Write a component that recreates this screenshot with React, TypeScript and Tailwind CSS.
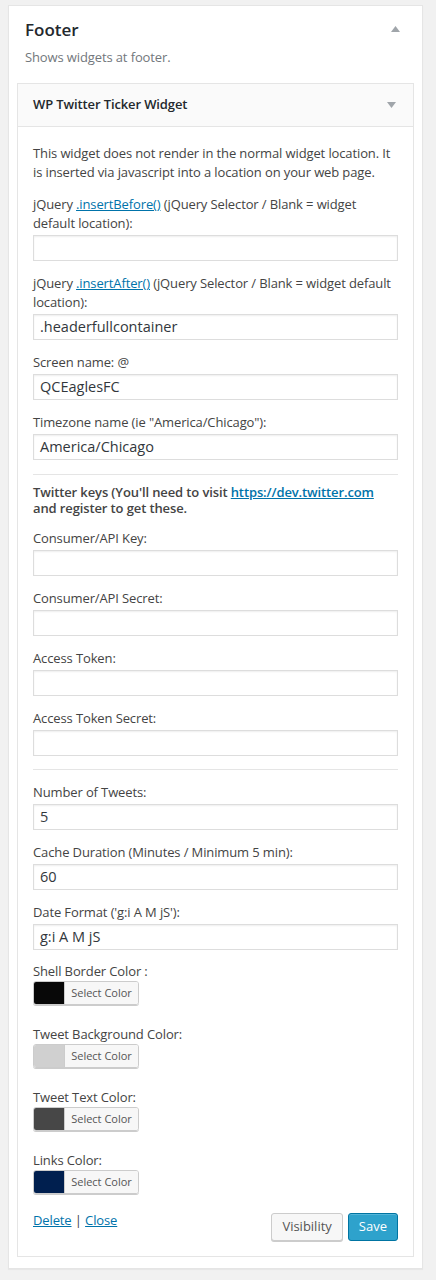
import React from "react";

const font = { fontFamily: '"Open Sans", "Noto Sans", sans-serif' };

function Field({ label, value }: { label: React.ReactNode; value?: string }) {
  return (
    <div className="mt-[13px]">
      <label className="block text-[13px] leading-[19px] tracking-[-0.12px] text-[#444]">{label}</label>
      <div className="mt-[2px] h-[26px] w-[365px] border border-[#ddd] bg-white px-[6px] text-[14.5px] leading-[24px] text-[#32373c] shadow-[inset_0_1px_2px_rgba(0,0,0,0.07)]">
        {value}
      </div>
    </div>
  );
}

function ColorField({ label, color, first }: { label: string; color: string; first?: boolean }) {
  return (
    <div className={first ? "mt-[12px]" : "mt-[20px]"}>
      <label className="block text-[13px] leading-[19px] tracking-[-0.12px] text-[#444]">{label}</label>
      <div className="flex h-[24px] w-[106px] overflow-hidden rounded-[3px] border border-[#ccc] shadow-[0_1px_0_#ccc]">
        <div className="w-[30px]" style={{ backgroundColor: color }} />
        <div className="flex flex-1 items-center justify-center border-l border-[#ccc] bg-[#f7f7f7] text-[11px] text-[#555]">
          Select Color
        </div>
      </div>
    </div>
  );
}

const A = ({ children }: { children: React.ReactNode }) => (
  <a href="#" className="text-[#0073aa] underline">
    {children}
  </a>
);

export default function App() {
  return (
    <div className="min-h-[1280px] bg-[#f1f1f1] pt-[5px]" style={font}>
      <div className="ml-[8px] w-[415px] border border-[#e5e5e5] bg-white px-[8px] pb-[11px] shadow-[0_1px_1px_rgba(0,0,0,0.04)]">
        {/* sidebar heading */}
        <div className="flex items-start justify-between pl-[8px] pr-[14px] pt-[13px]">
          <h2 className="text-[17px] font-semibold leading-[22px] text-[#23282d]">Footer</h2>
          <svg width="9" height="6" viewBox="0 0 9 6" className="mt-[7px]">
            <polygon points="4.5,0 9,6 0,6" fill="#a0a5aa" />
          </svg>
        </div>
        <p className="mt-[7px] pl-[8px] text-[13px] leading-[19px] tracking-[-0.12px] text-[#72777c]">Shows widgets at footer.</p>

        {/* widget */}
        <div className="mt-[16px] w-[397px] border border-[#e5e5e5] bg-white">
          <div className="flex h-[43px] items-center justify-between border-b border-[#e5e5e5] bg-[#fafafa] pl-[15px] pr-[17px]">
            <h3 className="text-[13px] font-semibold tracking-[-0.12px] text-[#23282d]">WP Twitter Ticker Widget</h3>
            <svg width="9" height="6" viewBox="0 0 9 6">
              <polygon points="0,0 9,0 4.5,6" fill="#a0a5aa" />
            </svg>
          </div>

          <div className="px-[15px] pb-[15px] pt-[17px]">
            <p className="text-[13px] leading-[19px] tracking-[-0.12px] text-[#444]">
              This widget does not render in the normal widget location. It is inserted via javascript into a location on your web page.
            </p>

            <Field
              label={
                <>
                  jQuery <A>.insertBefore()</A> (jQuery Selector / Blank = widget default location):
                </>
              }
            />
            <Field
              label={
                <>
                  jQuery <A>.insertAfter()</A> (jQuery Selector / Blank = widget default location):
                </>
              }
              value=".headerfullcontainer"
            />
            <Field label="Screen name: @" value="QCEaglesFC" />
            <Field label={'Timezone name (ie "America/Chicago"):'} value="America/Chicago" />

            <div className="mt-[14px] h-px w-[365px] bg-[#e5e5e5]" />

            <p className="mt-[9px] text-[13px] font-semibold leading-[16px] tracking-[-0.12px] text-[#444]">
              Twitter keys (You'll need to visit <A>https://dev.twitter.com</A> and register to get these.
            </p>
            <Field label="Consumer/API Key:" />
            <Field label="Consumer/API Secret:" />
            <Field label="Access Token:" />
            <Field label="Access Token Secret:" />

            <div className="mt-[13px] h-px w-[365px] bg-[#e5e5e5]" />

            <div className="mt-[2px]">
              <Field label="Number of Tweets:" value="5" />
            </div>
            <Field label="Cache Duration (Minutes / Minimum 5 min):" value="60" />
            <Field label="Date Format ('g:i A M jS'):" value="g:i A M jS" />

            <ColorField first label="Shell Border Color :" color="#080808" />
            <ColorField label="Tweet Background Color:" color="#d0d0d0" />
            <ColorField label="Tweet Text Color:" color="#474747" />
            <ColorField label="Links Color:" color="#001f4f" />

            <div className="mt-[19px] flex items-center justify-between">
              <div className="-mt-[12px] text-[13px] tracking-[-0.12px] text-[#444]">
                <A>Delete</A> | <A>Close</A>
              </div>
              <div className="flex gap-[5px]">
                <button className="h-[28px] rounded-[3px] border border-[#ccc] bg-[#f7f7f7] px-[10px] text-[13px] text-[#555] shadow-[0_1px_0_#ccc]">
                  Visibility
                </button>
                <button className="h-[28px] rounded-[3px] border border-[#0074a2] bg-[#2ea2cc] px-[10px] text-[13px] text-white shadow-[inset_0_1px_0_rgba(120,200,230,0.5)]">
                  Save
                </button>
              </div>
            </div>
          </div>
        </div>
      </div>
    </div>
  );
}
